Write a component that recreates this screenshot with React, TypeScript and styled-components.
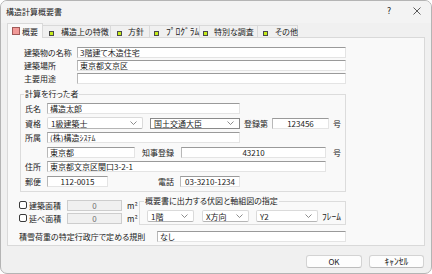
import React from "react";
import styled, { createGlobalStyle } from "styled-components";

const GlobalStyle = createGlobalStyle`
  html, body { margin: 0; padding: 0; background: #ffffff; }
  body {
    font-family: "Noto Sans CJK JP", "Noto Sans", sans-serif;
    font-size: 8px;
    font-feature-settings: "palt" 1;
    color: #1b1b1b;
  }
  * { box-sizing: border-box; }
`;

const Window = styled.div`
  width: 432px;
  height: 274px;
  border: 1px solid #b4b4b4;
  border-radius: 7px;
  background: #f0f0f0;
  display: flex;
  flex-direction: column;
  overflow: hidden;
`;

const TitleBar = styled.div`
  height: 22px;
  flex-shrink: 0;
  display: flex;
  align-items: center;
  padding-left: 5px;
  padding-bottom: 2px;
  background: #f3f3f3;
`;

const TitleText = styled.span`
  flex: 1;
  font-size: 8px;
`;

const CaptionButton = styled.div`
  width: 28px;
  height: 20px;
  display: flex;
  align-items: center;
  justify-content: center;
  font-family: "DejaVu Sans", sans-serif;
  font-size: 8px;
  color: #222;
`;

const Client = styled.div`
  flex: 1;
  display: flex;
  flex-direction: column;
  padding: 0 6px;
`;

const TabStrip = styled.div`
  height: 15px;
  display: flex;
  align-items: flex-end;
  position: relative;
  z-index: 1;
`;

const Tab = styled.div<{ $w: number; $pl: number; $gap: number; $selected?: boolean }>`
  width: ${(p) => p.$w}px;
  height: ${(p) => (p.$selected ? 15 : 12)}px;
  margin-bottom: ${(p) => (p.$selected ? 0 : 1)}px;
  display: flex;
  align-items: center;
  gap: ${(p) => p.$gap}px;
  padding-left: ${(p) => p.$pl}px;
  background: ${(p) => (p.$selected ? "#f9f9f9" : "#f0f0f0")};
  border-top: 1px solid #d9d9d9;
  border-right: 1px solid #d9d9d9;
  border-left: ${(p) => (p.$selected ? "1px solid #d9d9d9" : "none")};
  white-space: nowrap;
  font-size: 8px;
`;

const TabIcon = styled.span<{ $selected?: boolean }>`
  flex-shrink: 0;
  width: ${(p) => (p.$selected ? 8 : 5)}px;
  height: ${(p) => (p.$selected ? 8 : 5)}px;
  margin-top: ${(p) => (p.$selected ? 0 : 3)}px;
  background: ${(p) => (p.$selected ? "#f29a98" : "#c6ec1a")};
  border: 1px solid ${(p) => (p.$selected ? "#a05a58" : "#4a4a4a")};
`;

const HalfKana = styled.span`
  font-size: 9.5px;
  line-height: 1;
`;

const Panel = styled.div`
  margin-top: -1px;
  background: #f9f9f9;
  border: 1px solid #d9d9d9;
  padding: 8px 0 2px 11px;
  display: flex;
  flex-direction: column;
`;

const FormRow = styled.div<{ $h: number; $mt?: number }>`
  height: ${(p) => p.$h}px;
  margin-top: ${(p) => p.$mt ?? 0}px;
  display: flex;
  align-items: center;
  white-space: nowrap;
`;

const FieldLabel = styled.span<{ $w?: number; $pl?: number; $pr?: number; $ml?: number; $align?: string }>`
  flex-shrink: 0;
  width: ${(p) => (p.$w ? `${p.$w}px` : "auto")};
  padding-left: ${(p) => p.$pl ?? 0}px;
  padding-right: ${(p) => p.$pr ?? 0}px;
  margin-left: ${(p) => p.$ml ?? 0}px;
  text-align: ${(p) => p.$align ?? "left"};
  font-size: 8px;
  white-space: nowrap;
`;

const TextBox = styled.input<{ $w: number; $align?: string; $ml?: number }>`
  flex-shrink: 0;
  width: ${(p) => p.$w}px;
  height: 11px;
  margin: 0 0 0 ${(p) => p.$ml ?? 0}px;
  padding: 0 2px;
  border: 1px solid;
  border-color: #9a9a9a #e4e4e4 #e4e4e4 #b8b8b8;
  background: #ffffff;
  font-family: "Noto Sans CJK JP", "Noto Sans", sans-serif;
  font-feature-settings: "palt" 1;
  font-size: 8px;
  color: #1b1b1b;
  text-align: ${(p) => p.$align ?? "left"};
  outline: none;
  &:disabled {
    background: #f0f0f0;
    border-color: #cdcdcd;
    color: #707070;
  }
`;

const Combo = styled.div<{ $w: number; $ml?: number; $dark?: boolean }>`
  flex-shrink: 0;
  width: ${(p) => p.$w}px;
  height: ${(p) => (p.$dark ? 11 : 12)}px;
  margin-left: ${(p) => p.$ml ?? 0}px;
  display: flex;
  align-items: center;
  justify-content: space-between;
  padding: 0 5px 0 3px;
  background: #ffffff;
  border: 1px solid ${(p) => (p.$dark ? "#8a8a8a" : "#dadada")};
  border-bottom-color: ${(p) => (p.$dark ? "#8a8a8a" : "#b5b5b5")};
  border-radius: ${(p) => (p.$dark ? 0 : 2)}px;
  font-size: 8px;
`;

const GroupBox = styled.fieldset<{ $w: number; $ml?: number; $mt?: number; $pl: number; $pt: number; $pb: number }>`
  flex-shrink: 0;
  width: ${(p) => p.$w}px;
  margin: ${(p) => p.$mt ?? 0}px 0 0 ${(p) => p.$ml ?? 0}px;
  padding: ${(p) => p.$pt}px 0 ${(p) => p.$pb}px ${(p) => p.$pl}px;
  border: 1px solid #dcdcdc;
  min-width: 0;
`;

const GroupTitle = styled.legend<{ $ml?: number }>`
  font-size: 8px;
  line-height: 10px;
  height: 10px;
  padding: 0 1px;
  margin-left: ${(p) => p.$ml ?? -1}px;
`;

const GroupRow = styled.div`
  height: 14.5px;
  display: flex;
  align-items: center;
  white-space: nowrap;
`;

const BottomSection = styled.div`
  margin-top: 4px;
  display: flex;
  align-items: flex-start;
`;

const CheckColumn = styled.div`
  width: 120px;
  padding-top: 2.5px;
  display: flex;
  flex-direction: column;
`;

const CheckRow = styled.div`
  height: 13px;
  display: flex;
  align-items: center;
  white-space: nowrap;
`;

const CheckBox = styled.span`
  flex-shrink: 0;
  width: 8px;
  height: 8px;
  border: 1px solid #3a3a3a;
  border-radius: 2px;
  background: #ffffff;
`;

const InlineRow = styled.div`
  display: flex;
  align-items: center;
  white-space: nowrap;
`;

const ButtonRow = styled.div`
  display: flex;
  justify-content: flex-end;
  gap: 7px;
  padding-top: 9px;
  padding-right: 1px;
`;

const DialogButton = styled.button<{ $w: number }>`
  width: ${(p) => p.$w}px;
  height: 13px;
  padding: 0;
  margin: 0;
  background: #fdfdfd;
  border: 1px solid #d3d3d3;
  border-bottom-color: #bdbdbd;
  border-radius: 3px;
  font-family: "Noto Sans CJK JP", "Noto Sans", sans-serif;
  font-feature-settings: "palt" 1;
  font-size: 8px;
  color: #1b1b1b;
`;

const Chevron = () => (
  <svg width="7" height="4" viewBox="0 0 7 4">
    <path d="M0.5 0.5L3.5 3.5L6.5 0.5" fill="none" stroke="#707070" strokeWidth="0.8" />
  </svg>
);

const CloseIcon = () => (
  <svg width="8" height="8" viewBox="0 0 8 8">
    <path d="M0.5 0.5L7.5 7.5M7.5 0.5L0.5 7.5" stroke="#333" strokeWidth="0.8" />
  </svg>
);

const tabs = [
  { label: "構造上の特徴", w: 68, pl: 6, gap: 7, half: false },
  { label: "方針", w: 39, pl: 6, gap: 6, half: false },
  { label: "ﾌﾟﾛｸﾞﾗﾑ", w: 50, pl: 4, gap: 7, half: true },
  { label: "特別な調査", w: 58, pl: 3, gap: 6, half: false },
  { label: "その他", w: 40, pl: 5, gap: 7, half: false },
];

export default function App() {
  return (
    <>
      <GlobalStyle />
      <Window>
        <TitleBar>
          <TitleText>構造計算概要書</TitleText>
          <CaptionButton>?</CaptionButton>
          <CaptionButton>
            <CloseIcon />
          </CaptionButton>
        </TitleBar>
        <Client>
          <TabStrip>
            <Tab $w={36} $pl={4} $gap={2} $selected>
              <TabIcon $selected />
              <span>概要</span>
            </Tab>
            {tabs.map((t) => (
              <Tab key={t.label} $w={t.w} $pl={t.pl} $gap={t.gap}>
                <TabIcon />
                {t.half ? <HalfKana>{t.label}</HalfKana> : <span>{t.label}</span>}
              </Tab>
            ))}
          </TabStrip>
          <Panel>
            <FormRow $h={13}>
              <FieldLabel $w={58} $pl={5}>建築物の名称</FieldLabel>
              <TextBox $w={269} readOnly value="3階建て木造住宅" />
            </FormRow>
            <FormRow $h={13}>
              <FieldLabel $w={58} $pl={5}>建築場所</FieldLabel>
              <TextBox $w={269} readOnly value="東京都文京区" />
            </FormRow>
            <FormRow $h={13}>
              <FieldLabel $w={58} $pl={5}>主要用途</FieldLabel>
              <TextBox $w={269} readOnly value="" />
            </FormRow>

            <GroupBox $w={326} $ml={1} $mt={4} $pl={4} $pt={2.5} $pb={2.5}>
              <GroupTitle>計算を行った者</GroupTitle>
              <GroupRow>
                <FieldLabel $w={22}>氏名</FieldLabel>
                <TextBox $w={193} readOnly value="構造太郎" />
              </GroupRow>
              <GroupRow>
                <FieldLabel $w={22}>資格</FieldLabel>
                <Combo $w={96}>
                  <span>1級建築士</span>
                  <Chevron />
                </Combo>
                <Combo $w={90} $ml={7} $dark>
                  <span>国土交通大臣</span>
                  <Chevron />
                </Combo>
                <FieldLabel $w={28} $ml={4}>登録第</FieldLabel>
                <TextBox $w={57} $align="center" readOnly value="123456" />
                <FieldLabel $ml={4}>号</FieldLabel>
              </GroupRow>
              <GroupRow>
                <FieldLabel $w={22}>所属</FieldLabel>
                <TextBox $w={193} readOnly value="(株)構造ｼｽﾃﾑ" />
              </GroupRow>
              <GroupRow>
                <FieldLabel $w={22} />
                <TextBox $w={88} readOnly value="東京都" />
                <FieldLabel $w={39} $ml={7}>知事登録</FieldLabel>
                <TextBox $w={145} $align="center" readOnly value="43210" />
                <FieldLabel $ml={7}>号</FieldLabel>
              </GroupRow>
              <GroupRow>
                <FieldLabel $w={22}>住所</FieldLabel>
                <TextBox $w={279} readOnly value="東京都文京区関口3-2-1" />
              </GroupRow>
              <GroupRow>
                <FieldLabel $w={22}>郵便</FieldLabel>
                <TextBox $w={61} $align="center" readOnly value="112-0015" />
                <FieldLabel $w={72} $pr={6} $align="right">電話</FieldLabel>
                <TextBox $w={60} $align="center" readOnly value="03-3210-1234" />
              </GroupRow>
            </GroupBox>

            <BottomSection>
              <CheckColumn>
                <CheckRow>
                  <CheckBox />
                  <FieldLabel $w={40} $pl={2}>建築面積</FieldLabel>
                  <TextBox $w={55} $align="center" disabled value="0" />
                  <FieldLabel $ml={5}>m²</FieldLabel>
                </CheckRow>
                <CheckRow>
                  <CheckBox />
                  <FieldLabel $w={40} $pl={2}>延べ面積</FieldLabel>
                  <TextBox $w={55} $align="center" disabled value="0" />
                  <FieldLabel $ml={5}>m²</FieldLabel>
                </CheckRow>
              </CheckColumn>
              <GroupBox $w={207} $pl={7} $pt={4} $pb={2}>
                <GroupTitle $ml={-3}>概要書に出力する伏図と軸組図の指定</GroupTitle>
                <InlineRow>
                  <Combo $w={47}>
                    <span>1階</span>
                    <Chevron />
                  </Combo>
                  <Combo $w={47} $ml={8}>
                    <span>X方向</span>
                    <Chevron />
                  </Combo>
                  <Combo $w={62} $ml={7}>
                    <span>Y2</span>
                    <Chevron />
                  </Combo>
                  <FieldLabel $ml={4}>
                    <HalfKana>ﾌﾚｰﾑ</HalfKana>
                  </FieldLabel>
                </InlineRow>
              </GroupBox>
            </BottomSection>

            <FormRow $h={13} $mt={5}>
              <FieldLabel $w={138}>積雪荷重の特定行政庁で定める規則</FieldLabel>
              <TextBox $w={189} readOnly value="なし" />
            </FormRow>
          </Panel>
          <ButtonRow>
            <DialogButton $w={56}>OK</DialogButton>
            <DialogButton $w={55}>
              <HalfKana>ｷｬﾝｾﾙ</HalfKana>
            </DialogButton>
          </ButtonRow>
        </Client>
      </Window>
    </>
  );
}
